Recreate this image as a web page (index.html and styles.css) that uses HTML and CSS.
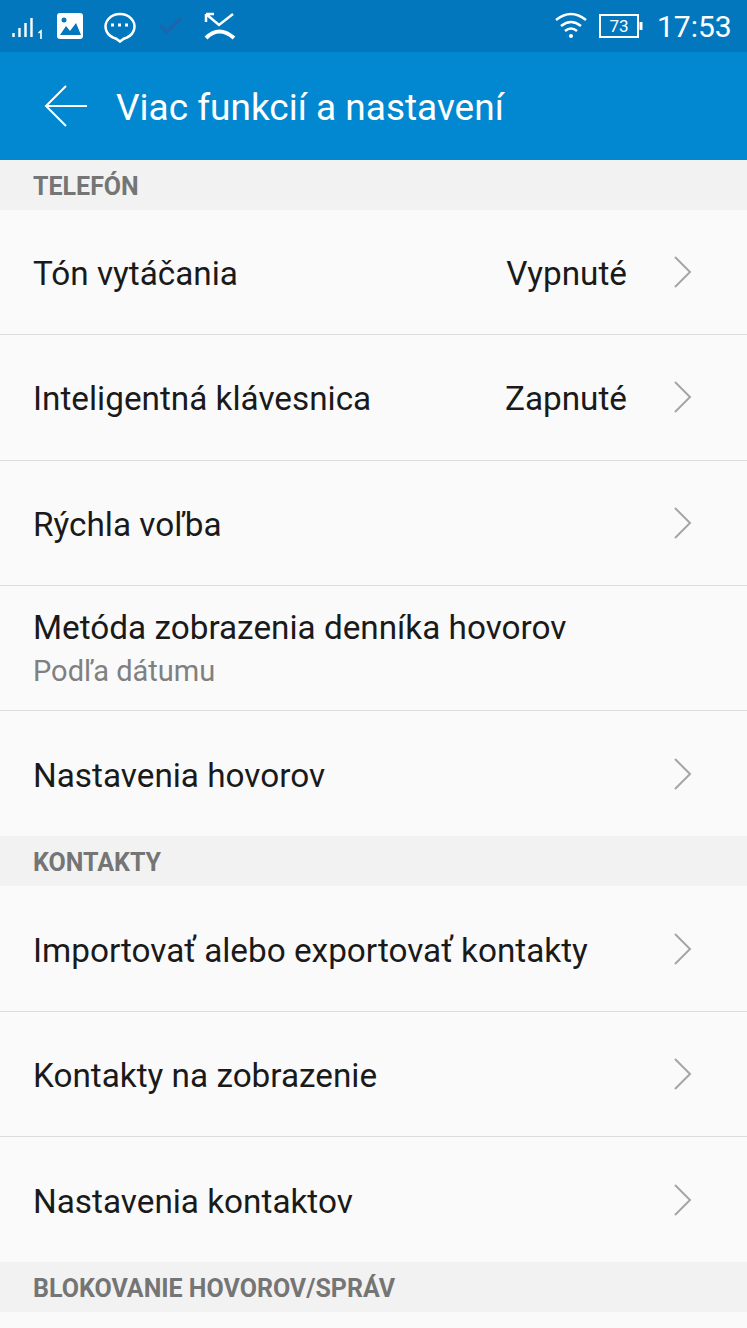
FILE: index.html
```html
<!DOCTYPE html>
<html lang="sk">
<head>
<meta charset="utf-8">
<title>Viac funkcií a nastavení</title>
<link rel="stylesheet" href="styles.css">
</head>
<body>
<div class="status">
<svg class="icons-left" width="250" height="52" viewBox="0 0 250 52" fill="none" stroke="#fff">
<path d="M13.5 33v4M19.5 28v9M25.5 23v14M31.5 18v19" stroke-width="2.4"/>
<path d="M38.5 33l2.5-2v8" stroke-width="1.6"/>
<rect x="57" y="13" width="26" height="26" rx="3" fill="#fff" stroke="none"/>
<path d="M60 35l6-9 4 5 6-8 5 12z" fill="#0277bd" stroke="none"/>
<circle cx="64" cy="20" r="2.5" fill="#0277bd" stroke="none"/>
<path d="M113 37.5a14.5 12.500 0 1 1 14 0q-3 .5-7 4-4-3.500-7-4z" stroke-width="2.500"/>
<path d="M111 25h3M118 25h3M125 25h3" stroke-width="3"/>
<path d="M160 25l7 7 14-14" stroke="#1768ae" stroke-width="4"/>
<path d="M206 14l13 11 14-11M206 14v8M206 14h8" stroke-width="2.500"/>
<path d="M206 38q13-13 28 0" stroke-width="4"/>
</svg>
<svg class="icons-right" width="92" height="52" viewBox="0 0 92 52" fill="none" stroke="#fff">
<path d="M2 20q15-12 30 0M7 26q10-8 20 0M11 31q6-5 12 0" stroke-width="2.500"/>
<circle cx="17" cy="36" r="2" fill="#fff" stroke="none"/>
<rect x="46" y="15" width="38" height="22" stroke-width="2"/><path d="M87 22v8" stroke-width="3"/>
<text class="battery" x="65" y="32" text-anchor="middle">73</text>
</svg>
<span class="time">17:53</span>
</div>
<header class="bar">
<svg width="44" height="44" viewBox="0 0 44 44" fill="none" stroke="#fff" stroke-width="2"><path d="M43 22H2M22 2L2 22l20 20"/></svg>
<h1 class="title"><span class="fit">Viac funkcií a nastavení</span></h1>
</header>
<main>
<h2 class="section">TELEFÓN</h2>
<div class="row"><span class="label">Tón vytáčania</span><span class="value">Vypnuté</span><svg class="chev" viewBox="0 0 20 34"><path d="M2 2l15 15L2 32"/></svg></div>
<div class="row"><span class="label">Inteligentná klávesnica</span><span class="value">Zapnuté</span><svg class="chev" viewBox="0 0 20 34"><path d="M2 2l15 15L2 32"/></svg></div>
<div class="row"><span class="label">Rýchla voľba</span><svg class="chev" viewBox="0 0 20 34"><path d="M2 2l15 15L2 32"/></svg></div>
<div class="row"><div class="label double"><span>Metóda zobrazenia denníka hovorov</span><span class="sub">Podľa dátumu</span></div></div>
<div class="row last"><span class="label">Nastavenia hovorov</span><svg class="chev" viewBox="0 0 20 34"><path d="M2 2l15 15L2 32"/></svg></div>
<h2 class="section">KONTAKTY</h2>
<div class="row"><span class="label">Importovať alebo exportovať kontakty</span><svg class="chev" viewBox="0 0 20 34"><path d="M2 2l15 15L2 32"/></svg></div>
<div class="row"><span class="label">Kontakty na zobrazenie</span><svg class="chev" viewBox="0 0 20 34"><path d="M2 2l15 15L2 32"/></svg></div>
<div class="row last"><span class="label">Nastavenia kontaktov</span><svg class="chev" viewBox="0 0 20 34"><path d="M2 2l15 15L2 32"/></svg></div>
<h2 class="section">BLOKOVANIE HOVOROV/SPRÁV</h2>
</main>
</body>
</html>
```
FILE: styles.css
```css
* { box-sizing: border-box; }
body { margin: 0; width: 747px; height: 1328px; overflow: hidden; background: #fafafa; color: #1a1a1a; font-family: Roboto, sans-serif; }
.status { height: 52px; display: flex; align-items: center; background: #0277bd; color: #fff; padding-right: 17px; }
.icons-right { margin-left: auto; }
.battery { font-size: 17px; fill: #fff; stroke: none; }
.time { width: 73px; margin-left: 11px; font-size: 30px; line-height: 52px; padding-top: 2px; white-space: nowrap; }
.bar { height: 108px; display: flex; align-items: center; gap: 28px; padding-left: 44px; background: #0288d1; color: #fff; }
.title { margin: 0; padding-top: 2px; font-size: 37px; font-weight: 400; }
.section { margin: 0; height: 50px; padding: 2px 33px 0; background: #f2f2f2; color: #757575; font-size: 25px; line-height: 50px; font-weight: 700; }
.row { height: 125.300px; display: flex; align-items: center; padding: 0 54px 0 33px; border-bottom: 1px solid #dcdcdc; font-size: 33.300px; }
.last { border-bottom: 0; }
.label { flex: 1; padding-top: 3px; white-space: nowrap; }
.value { margin-right: 46px; padding-top: 3px; }
.chev { width: 20px; height: 34px; fill: none; stroke: #a5a5a5; stroke-width: 2; }
.double { display: flex; flex-direction: column; gap: 5px; line-height: 39px; }
.sub { font-size: 29px; color: #808080; }
```
